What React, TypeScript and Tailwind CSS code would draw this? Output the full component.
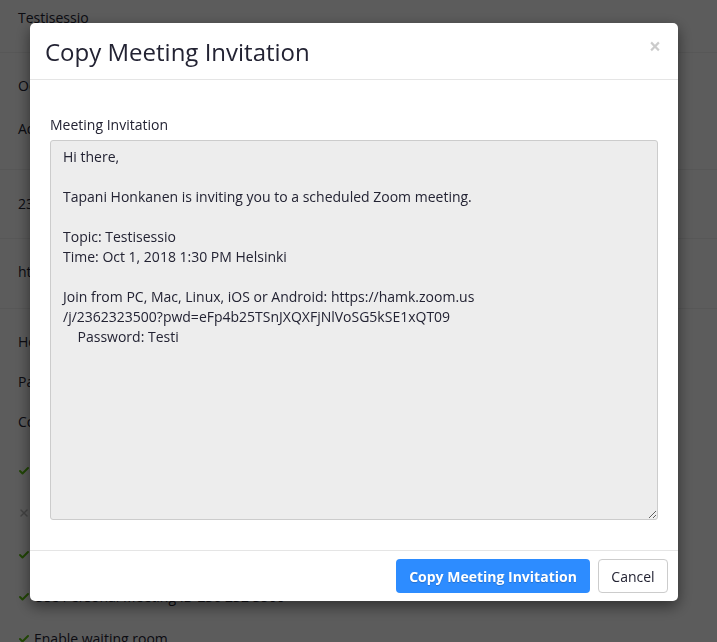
import React from "react";
import { Check, X } from "lucide-react";

const invitation = `Hi there,

Tapani Honkanen is inviting you to a scheduled Zoom meeting.

Topic: Testisessio
Time: Oct 1, 2018 1:30 PM Helsinki

Join from PC, Mac, Linux, iOS or Android: https://hamk.zoom.us
/j/2362323500?pwd=eFp4b25TSnJXQXFjNlVoSG5kSE1xQT09
    Password: Testi`;

const options = [
  { on: true, label: "Enable join before host" },
  { on: false, label: "Mute participants upon entry" },
  { on: true, label: "Enable Personal Meeting ID" },
  { on: true, label: "Use Personal Meeting ID 236 232 3500" },
  { on: true, label: "Enable waiting room" },
];

function BackgroundPage() {
  return (
    <div className="min-h-[642px] bg-white text-[14px] leading-[20px] text-[#232333]">
      <div className="h-[53px] border-b border-[#f0f0f0] px-[18px] pt-[8px]">Testisessio</div>
      <div className="h-[117px] border-b border-[#f0f0f0] px-[18px] pt-[23px] flex flex-col gap-[23px]">
        <p>Occurs Sep 30, 2018</p>
        <p>Add to calendar</p>
      </div>
      <div className="h-[69px] border-b border-[#f0f0f0] px-[18px] pt-[24px]">236 232 3500</div>
      <div className="h-[70px] border-b border-[#f0f0f0] px-[18px] pt-[23px]">https://hamk.zoom.us/j/2362323500</div>
      <div className="px-[18px] pt-[23px] flex flex-col gap-[20px]">
        <p>Host Video on</p>
        <p>Participant Video on</p>
        <p>Computer audio</p>
      </div>
      <div className="px-[18px] pt-[29px] flex flex-col gap-[22px]">
        {options.map((o, i) => (
          <div key={i} className="flex items-center gap-[4px]">
            {o.on ? (
              <Check className="w-[12px] h-[12px] text-[#5cc010]" strokeWidth={4} />
            ) : (
              <X className="w-[12px] h-[12px] text-[#bbbbbb]" strokeWidth={3} />
            )}
            <span>{o.label}</span>
          </div>
        ))}
      </div>
    </div>
  );
}

export default function App() {
  return (
    <div className="relative h-[642px] overflow-hidden" style={{ fontFamily: '"Open Sans", "Noto Sans", sans-serif' }}>
      <BackgroundPage />
      <div className="fixed inset-0 bg-black/[0.64]" />
      <div className="fixed left-[30px] top-[23px] w-[648px] bg-white rounded-[5px] shadow-[0_5px_15px_rgba(0,0,0,0.5)] text-[#232333]">
        <div className="h-[57px] border-b border-[#e5e5e5] px-[15px] flex items-center justify-between">
          <h4 className="text-[24px] leading-[30px] text-[#232333] pt-[1px]">Copy Meeting Invitation</h4>
          <button className="text-[21px] font-bold leading-none text-black opacity-20 mr-[2px] -mt-[9px]">×</button>
        </div>
        <div className="px-[20px] pt-[35px] pb-[30px]">
          <label className="block text-[14px] leading-[20px] mb-[5px]">Meeting Invitation</label>
          <textarea
            readOnly
            value={invitation}
            className="block w-full h-[380px] bg-[#ededed] border border-[#cccccc] rounded-[3px] px-[12px] pt-[6px] text-[14px] leading-[20px] text-[#232333] outline-none"
            style={{ fontFamily: '"Open Sans", "Noto Sans", sans-serif' }}
          />
        </div>
        <div className="border-t border-[#e5e5e5] flex justify-end gap-[8px] pt-[8px] pb-[8px] pr-[10px]">
          <button className="h-[34px] w-[194px] bg-[#2d8cff] rounded-[4px] text-white text-[14px] font-bold [text-shadow:0_1px_1px_rgba(0,0,0,0.2)]">
            Copy Meeting Invitation
          </button>
          <button className="h-[34px] w-[70px] border border-[#cccccc] rounded-[4px] text-[14px] text-[#232333] bg-white">
            Cancel
          </button>
        </div>
      </div>
    </div>
  );
}
